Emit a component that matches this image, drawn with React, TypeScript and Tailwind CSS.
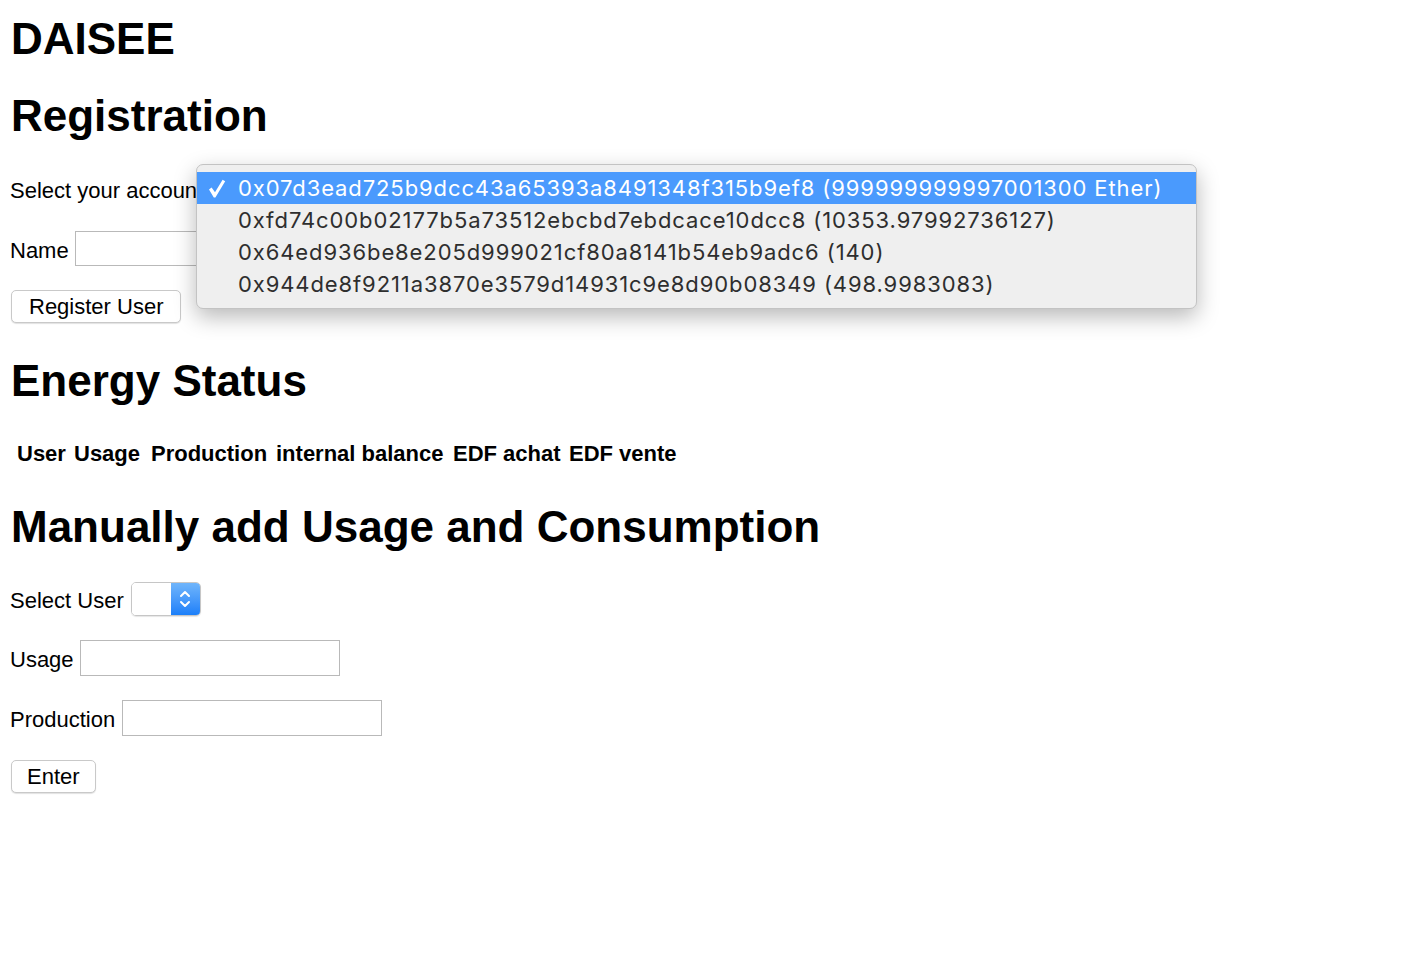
import React from "react";

const accounts = [
  "0x07d3ead725b9dcc43a65393a8491348f315b9ef8 (999999999997001300 Ether)",
  "0xfd74c00b02177b5a73512ebcbd7ebdcace10dcc8 (10353.97992736127)",
  "0x64ed936be8e205d999021cf80a8141b54eb9adc6 (140)",
  "0x944de8f9211a3870e3579d14931c9e8d90b08349 (498.9983083)",
];

const columns = [
  { label: "User", w: "w-[57px]" },
  { label: "Usage", w: "w-[77px]" },
  { label: "Production", w: "w-[125px]" },
  { label: "internal balance", w: "w-[177px]" },
  { label: "EDF achat", w: "w-[116px]" },
  { label: "EDF vente", w: "w-[112px]" },
];

function Heading({ children, className = "" }: { children: React.ReactNode; className?: string }) {
  return <h1 className={`text-[44px] leading-[50px] h-[50px] font-bold whitespace-nowrap ${className}`}>{children}</h1>;
}

function Button({ children, className = "" }: { children: React.ReactNode; className?: string }) {
  return (
    <button className={`h-[33px] bg-white border border-[#c9c9c9] rounded-[5px] shadow-[0_1px_1px_rgba(0,0,0,0.12)] text-[22px] leading-[25px] text-black ${className}`}>
      {children}
    </button>
  );
}

function TextInput({ className = "" }: { className?: string }) {
  return <input type="text" className={`w-[260px] bg-white border border-[#b9b9b9] outline-none ${className}`} />;
}

function StepperSelect() {
  return (
    <div className="flex h-[34px] w-[70px] rounded-[5px] border border-[#c6c6c6] shadow-[0_1px_1px_rgba(0,0,0,0.1)] overflow-hidden">
      <div className="flex-1 bg-white" />
      <div className="w-[29px] flex items-center justify-center bg-gradient-to-b from-[#6fb5fb] to-[#1a7ff9]">
        <svg width="12" height="20" viewBox="0 0 12 20" fill="none" stroke="white" strokeWidth="2" strokeLinecap="round" strokeLinejoin="round">
          <path d="M2 7 L6 3 L10 7" />
          <path d="M2 13 L6 17 L10 13" />
        </svg>
      </div>
    </div>
  );
}

function AccountPopup() {
  return (
    <div className="absolute left-[196px] top-[164px] w-[1001px] h-[145px] rounded-[7px] bg-[#efefef] border border-[#c3c3c3] shadow-[0_8px_22px_rgba(0,0,0,0.28)] pt-[7px] z-10">
      {accounts.map((a, i) => (
        <div
          key={a}
          className={`relative h-[32px] flex items-center pl-[41px] whitespace-nowrap text-[22px] tracking-[0.9px] ${
            i === 0 ? "bg-[#4a9afd] text-white" : "text-[#2e2e2e]"
          }`}
          style={{ fontFamily: "Inter, 'Noto Sans', sans-serif" }}
        >
          {i === 0 && (
            <svg className="absolute left-[11px] top-[7px]" width="18" height="19" viewBox="0 0 18 19" fill="white">
              <path d="M1 10.5 L3.6 8.6 L7 13.2 L14.6 0.8 L17.2 2.2 L7.4 18.4 L5.8 18.4 Z" />
            </svg>
          )}
          {a}
        </div>
      ))}
    </div>
  );
}

export default function App() {
  return (
    <div className="relative min-h-[958px] bg-white text-black pl-[11px] pt-[14px]" style={{ fontFamily: "'Liberation Sans', Arial, Helvetica, sans-serif" }}>
      <Heading>DAISEE</Heading>
      <Heading className="mt-[27px]">Registration</Heading>

      <div className="mt-[31px] h-[36px] flex items-center gap-[7px] text-[22px] leading-[25px] -ml-px">
        <span className="whitespace-nowrap">Select your account</span>
        <select className="h-[30px] w-[200px] border border-[#c6c6c6] rounded-[5px] bg-white" />
      </div>

      <div className="mt-[23px] h-[35px] flex items-center gap-[6px] text-[22px] leading-[25px] -ml-px">
        <span className="mt-[4px]">Name</span>
        <TextInput className="h-[35px]" />
      </div>

      <div className="mt-[24px]">
        <Button className="px-[17px]">Register User</Button>
      </div>

      <Heading className="mt-[33px]">Energy Status</Heading>

      <table className="mt-[35px] border-collapse">
        <thead>
          <tr className="h-[25px]">
            {columns.map((c) => (
              <th key={c.label} className={`${c.w} pl-[6px] p-0 text-left text-[22px] leading-[25px] font-bold whitespace-nowrap`}>
                {c.label}
              </th>
            ))}
          </tr>
        </thead>
      </table>

      <Heading className="mt-[36px]">Manually add Usage and Consumption</Heading>

      <div className="mt-[30px] h-[34px] flex items-center gap-[7px] text-[22px] leading-[25px] -ml-px">
        <span className="mt-[2px]">Select User</span>
        <StepperSelect />
      </div>

      <div className="mt-[24px] h-[36px] flex items-center gap-[6px] text-[22px] leading-[25px] -ml-px">
        <span className="mt-[2px]">Usage</span>
        <TextInput className="h-[36px]" />
      </div>

      <div className="mt-[24px] h-[36px] flex items-center gap-[7px] text-[22px] leading-[25px] -ml-px">
        <span className="mt-[2px]">Production</span>
        <TextInput className="h-[36px]" />
      </div>

      <div className="mt-[24px]">
        <Button className="px-[15px]">Enter</Button>
      </div>

      <AccountPopup />
    </div>
  );
}
